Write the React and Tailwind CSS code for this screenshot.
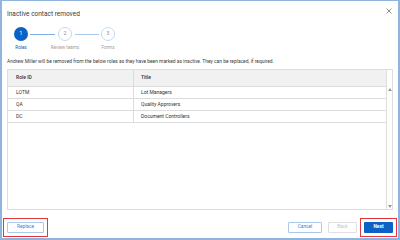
import React from 'react';

const rows = [
  { id: 'LOTM', title: 'Lot Managers' },
  { id: 'QA', title: 'Quality Approvers' },
  { id: 'DC', title: 'Document Controllers' },
];

function Circle({ n, active }) {
  return (
    <div
      className={
        active
          ? 'w-[14px] h-[14px] rounded-full bg-[#0b62c4] text-white flex items-center justify-center text-[5px]'
          : 'w-[14px] h-[14px] rounded-full border border-[#c3d9f2] bg-white text-[#8a8a8a] flex items-center justify-center text-[5px]'
      }
    >
      {n}
    </div>
  );
}

export default function App() {
  return (
    <div
      className="w-[400px] h-[240px] bg-white border-t border-l-2 border-r-2 border-b-2 border-[#8fb4dd] flex flex-col text-[#333]"
      style={{ fontFamily: 'Roboto, "Liberation Sans", sans-serif' }}
    >
      {/* header */}
      <div className="shrink-0 flex items-center justify-between pl-[5px] pr-[6px] pt-[8px] h-[19px]">
        <span className="text-[6.5px] text-[#3a3a3a] leading-none">Inactive contact removed</span>
        <svg width="6" height="6" viewBox="0 0 10 10" className="mb-[8px]">
          <path d="M1 1 L9 9 M9 1 L1 9" stroke="#8a8a8a" strokeWidth="1.6" />
        </svg>
      </div>

      {/* stepper */}
      <div className="shrink-0 flex items-center mt-[7px] ml-[12px] h-[14px]">
        <Circle n="1" active />
        <div className="ml-[2px] w-[25px] h-px bg-[#7fb0e6]" />
        <div className="ml-[3px]">
          <Circle n="2" />
        </div>
        <div className="ml-[3px] w-[24px] h-px bg-[#a9c9ee]" />
        <div className="ml-[2px]">
          <Circle n="3" />
        </div>
      </div>
      <div className="shrink-0 flex items-center mt-[4px] text-[4.6px] leading-none h-[6px]">
        <span className="w-[40px] ml-[-1px] text-center text-[#0b62c4]">Roles</span>
        <span className="w-[40px] ml-[4px] text-center text-[#a0a0a0]">Review teams</span>
        <span className="w-[40px] ml-[3px] text-center text-[#a0a0a0]">Forms</span>
      </div>

      {/* message */}
      <p className="shrink-0 mt-[7px] h-[6px] flex items-center pl-[5px] text-[4.9px] leading-none text-[#3a3a3a]">
        Andrew Miller will be removed from the below roles as they have been marked as inactive. They can be replaced, if required.
      </p>

      {/* grid */}
      <div className="mt-[5px] mx-[5px] flex-1 min-h-0 border border-[#dedede] flex">
        <div className="flex-1 flex flex-col">
          <div className="flex h-[17px] bg-[#f1f1f1] border-b border-[#dcdcdc] text-[5px] font-medium text-[#333]">
            <div className="w-[126px] border-r border-[#dcdcdc] flex items-center pl-[8px]">Role ID</div>
            <div className="flex-1 flex items-center pl-[7px]">Title</div>
          </div>
          {rows.map((r) => (
            <div key={r.id} className="flex h-[12px] border-b border-[#dcdcdc] text-[5px] text-[#333]">
              <div className="w-[126px] border-r border-[#dcdcdc] flex items-center pl-[8px]">{r.id}</div>
              <div className="flex-1 flex items-center pl-[7px]">{r.title}</div>
            </div>
          ))}
        </div>
        <div className="w-[6px] border-l border-[#dedede] flex flex-col items-center justify-between pt-[18px] pb-[1px]">
          <svg width="4" height="3" viewBox="0 0 4 3">
            <path d="M0 3 L2 0 L4 3 Z" fill="#9a9a9a" />
          </svg>
          <svg width="4" height="3" viewBox="0 0 4 3">
            <path d="M0 0 L2 3 L4 0 Z" fill="#9a9a9a" />
          </svg>
        </div>
      </div>

      {/* footer */}
      <div className="shrink-0 flex items-center justify-between mt-[8px] mb-[1px] px-[1px] h-[19px]">
        <div className="flex border border-[#e2363b] p-[3px]">
          <button className="w-[37px] h-[11px] border border-[#a9c8ec] rounded-[1px] text-[4.8px] leading-none text-[#3d7fd0] bg-white">
            Replace
          </button>
        </div>
        <div className="flex items-center">
          <button className="w-[34px] h-[11px] border border-[#a9c8ec] rounded-[1px] text-[4.8px] leading-none text-[#3d7fd0] bg-white">
            Cancel
          </button>
          <button className="ml-[6px] w-[29px] h-[11px] border border-[#e0e0e0] rounded-[1px] text-[4.8px] leading-none text-[#c4c4c4] bg-white">
            Back
          </button>
          <div className="ml-[3px] flex border border-[#e2363b] p-[3px]">
            <button className="w-[29px] h-[11px] rounded-[1px] text-[4.8px] leading-none font-bold text-white bg-[#0b62c4]">
              Next
            </button>
          </div>
        </div>
      </div>
    </div>
  );
}
